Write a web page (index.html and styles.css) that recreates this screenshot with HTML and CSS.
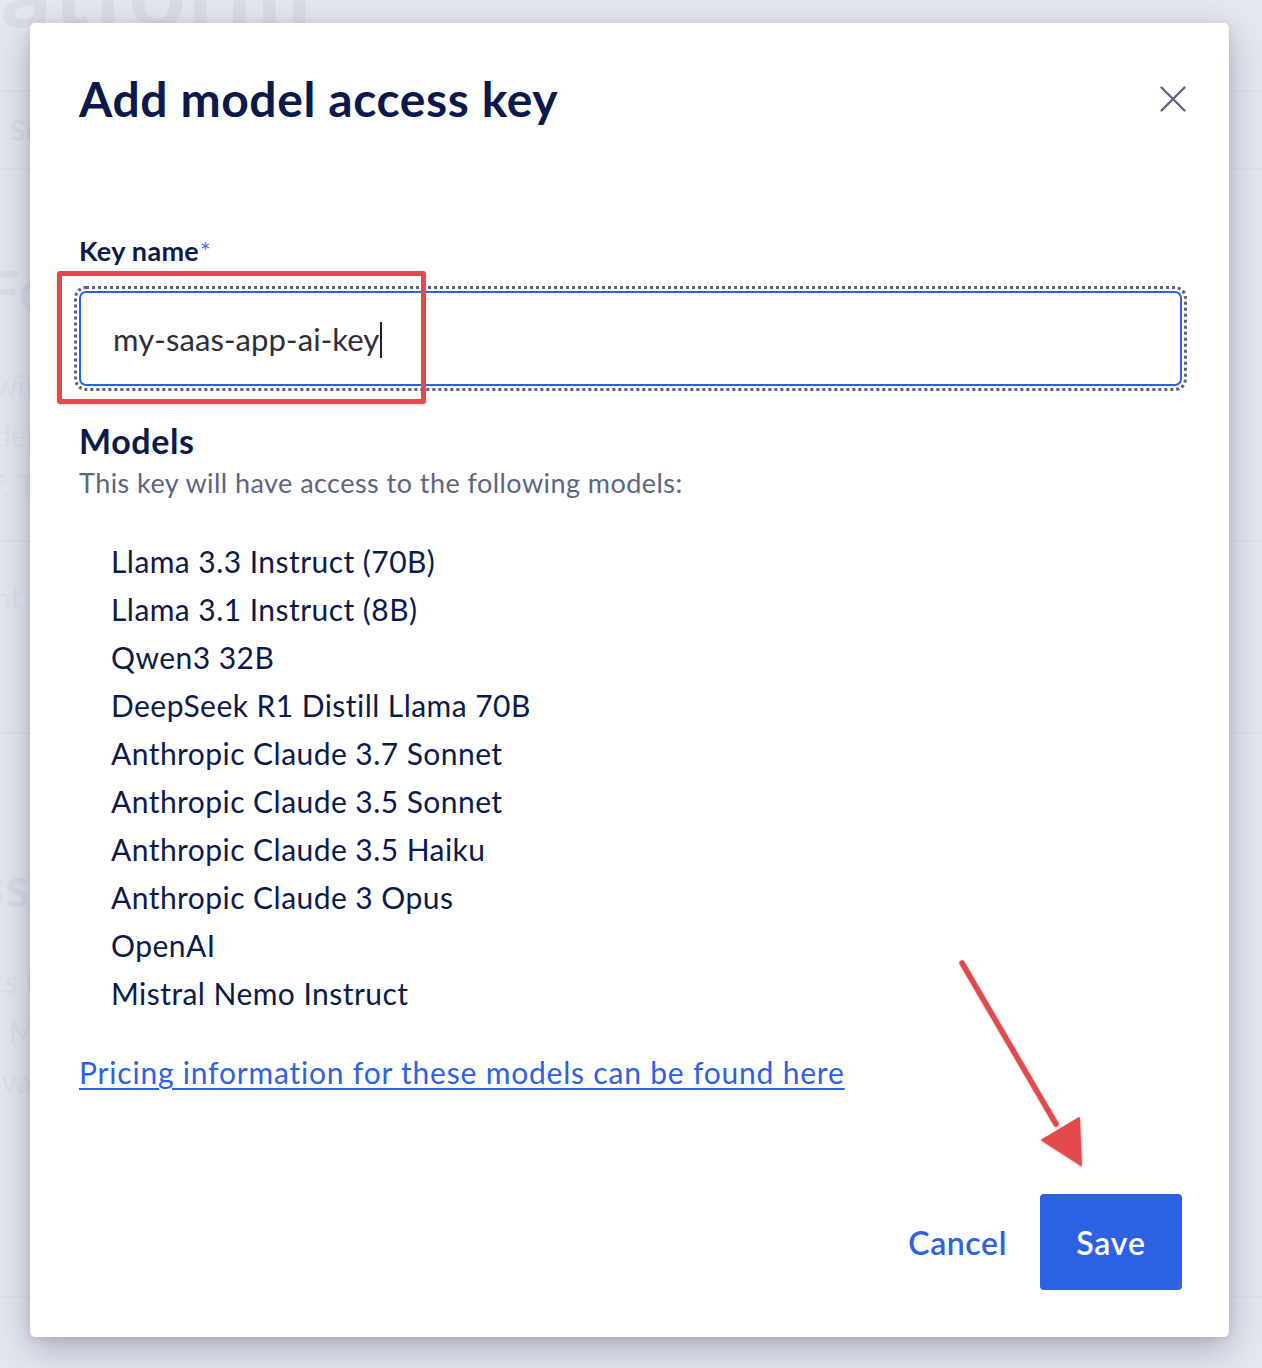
FILE: index.html
```html
<!DOCTYPE html>
<html lang="en">
<head>
<meta charset="utf-8">
<title>Add model access key</title>
<link rel="stylesheet" href="styles.css">
</head>
<body>
<div class="page">
  <div class="page-title">latform</div>
  <div class="page-rule rule-top"></div>
  <div class="page-tabs">Settings</div>
  <div class="page-rule rule-tabs"></div>
  <div class="page-h2">Foundation models</div>
  <p class="page-p">with</p>
  <p class="page-p">deploy</p>
  <p class="page-p">f. The</p>
  <div class="page-rule rule-mid"></div>
  <p class="page-p p-after">nt in</p>
  <div class="page-rule rule-mid2"></div>
  <div class="page-h2 h2-second">ss keys</div>
  <p class="page-p p-tight">ts to</p>
  <p class="page-p p-tight">, Meta</p>
  <p class="page-p p-tight">ivate</p>
  <div class="page-rule rule-bottom"></div>
</div>

<div class="overlay">
  <div class="modal" role="dialog" aria-labelledby="dlg-title">
    <div class="modal-head">
      <h1 id="dlg-title" class="modal-title">Add model access key</h1>
      <button class="close-btn" aria-label="Close">
        <svg width="26" height="26" viewBox="0 0 26 26"><path d="M1.5 1.5 L24.5 24.5 M24.5 1.5 L1.5 24.5" stroke="#5b6580" stroke-width="2.4" stroke-linecap="round" fill="none"/></svg>
      </button>
    </div>

    <label class="field-label" for="keyname">Key name<span class="req">*</span></label>
    <div class="input-wrap">
      <div class="input-box"><span class="input-text">my-saas-app-ai-key</span><span class="caret"></span></div>
      <div class="annot-box"></div>
    </div>

    <h2 class="section-title">Models</h2>
    <p class="section-sub">This key will have access to the following models:</p>

    <ul class="model-list">
      <li>Llama 3.3 Instruct (70B)</li>
      <li>Llama 3.1 Instruct (8B)</li>
      <li>Qwen3 32B</li>
      <li>DeepSeek R1 Distill Llama 70B</li>
      <li>Anthropic Claude 3.7 Sonnet</li>
      <li>Anthropic Claude 3.5 Sonnet</li>
      <li>Anthropic Claude 3.5 Haiku</li>
      <li>Anthropic Claude 3 Opus</li>
      <li>OpenAI</li>
      <li>Mistral Nemo Instruct</li>
    </ul>

    <a class="pricing-link" href="#">Pricing information for these models can be found here</a>

    <div class="modal-foot">
      <button class="btn-cancel">Cancel</button>
      <button class="btn-save">Save</button>
      <svg class="annot-arrow" width="140" height="220" viewBox="0 0 140 220">
        <defs>
          <filter id="sh" x="-20%" y="-20%" width="140%" height="140%">
            <feDropShadow dx="1" dy="1.5" stdDeviation="1.2" flood-color="#000" flood-opacity="0.22"/>
          </filter>
        </defs>
        <g filter="url(#sh)">
          <path d="M12 13 L106 174" stroke="#e34a4d" stroke-width="5.5" stroke-linecap="round" fill="none"/>
          <path d="M131 215 L92 190 L129 168 Z" fill="#e34a4d" stroke="#e34a4d" stroke-width="2" stroke-linejoin="round"/>
        </g>
      </svg>
    </div>
  </div>
</div>
</body>
</html>
```

FILE: styles.css
```css
* { box-sizing: border-box; }
html, body { margin: 0; padding: 0; }
body {
  width: 1262px;
  height: 1368px;
  overflow: hidden;
  background: #eceef3;
  font-family: "Lato", "Open Sans", sans-serif;
  position: relative;
}

/* background page (dimmed) */
.page {
  padding-left: 0;
  color: #cfd3dd;
}
.page-title {
  font-size: 100px;
  font-weight: 700;
  line-height: 1;
  margin-top: -62px;
  margin-left: -26px;
  color: #d3d6df;
  letter-spacing: 2px;
}
.page-rule { height: 2px; background: #dcdfe7; }
.rule-top { margin-top: 52px; }
.page-tabs { font-size: 28px; font-weight: 700; margin: 20px 0 0 10px; color: #d4d7df; line-height: 36px; }
.rule-tabs { margin-top: 20px; }
.page-h2 { font-size: 56px; font-weight: 700; margin: 90px 0 0 -12px; color: #d4d7df; line-height: 60px; letter-spacing: 1px; }
.page-p { font-size: 30px; margin: 0 0 0 -6px; line-height: 50px; color: #d9dce4; }
.page-p:first-of-type { margin-top: 40px; }
.rule-mid { margin-top: 30px; }
.p-after { margin-top: 30px; }
.rule-mid2 { margin-top: 110px; }
.h2-second { margin-top: 122px; margin-left: -20px; }
.p-tight { margin-top: 0; }
.h2-second + .p-tight { margin-top: 40px; }
.rule-bottom { margin-top: 190px; }

/* overlay + modal */
.overlay {
  position: absolute;
  inset: 0;
  background: rgba(226, 228, 236, 0.55);
}
.modal {
  position: absolute;
  left: 30px;
  top: 23px;
  width: 1199px;
  height: 1314px;
  background: #fff;
  border-radius: 5px;
  box-shadow: 0 12px 38px rgba(40, 50, 90, 0.32), 0 2px 8px rgba(40, 50, 90, 0.12);
  padding: 0 43px 0 49px;
  color: #0c1a4b;
}
.modal-head {
  display: flex;
  justify-content: space-between;
  align-items: flex-start;
  padding-top: 46px;
}
.modal-title {
  margin: 0;
  font-size: 48px;
  font-weight: 700;
  line-height: 60px;
  color: #0c1a4b;
  letter-spacing: 0.6px;
}
.close-btn {
  border: 0;
  background: none;
  padding: 0;
  margin: 17px 0 0 0;
  width: 26px;
  height: 26px;
  cursor: pointer;
}
.close-btn svg { display: block; }

.field-label {
  display: block;
  margin-top: 106px;
  font-size: 27px;
  font-weight: 700;
  line-height: 32px;
  color: #0c1a4b;
  letter-spacing: 0.3px;
}
.req { color: #3b74ee; font-weight: 400; font-size: 25px; margin-left: 1px; }

.input-wrap {
  position: relative;
  margin-top: 24px;
}
.input-box {
  height: 95px;
  border: 2px solid #2c62e2;
  border-radius: 7px;
  outline: 3px dotted #59627c;
  outline-offset: 2px;
  display: flex;
  align-items: center;
  padding-left: 32px;
  width: 1103px;
}
.input-text {
  font-size: 31px;
  color: #2e2f36;
  letter-spacing: 0.1px;
}
.caret {
  display: inline-block;
  width: 2px;
  height: 36px;
  background: #222;
  margin-left: 1px;
  position: relative;
  top: 1px;
}
.annot-box {
  position: absolute;
  left: -22px;
  top: -20px;
  width: 369px;
  height: 133px;
  border: 5px solid #e34a4d;
  border-radius: 3px;
  box-shadow: 0 1px 3px rgba(0,0,0,0.15);
}

.section-title {
  margin: 35px 0 0;
  font-size: 34px;
  font-weight: 700;
  line-height: 40px;
  color: #0c1a4b;
  letter-spacing: 0.6px;
}
.section-sub {
  margin: 4px 0 0;
  font-size: 27px;
  line-height: 36px;
  color: #5b6580;
  letter-spacing: 0.45px;
}
.model-list {
  list-style: none;
  margin: 36px 0 0;
  padding: 0 0 0 32px;
}
.model-list li {
  font-size: 30px;
  line-height: 48px;
  color: #0c1a4b;
  letter-spacing: 0.45px;
}
.pricing-link {
  display: inline-block;
  margin-top: 35px;
  font-size: 30px;
  line-height: 40px;
  color: #2c62e2;
  text-decoration: underline;
  text-decoration-thickness: 2px;
  text-underline-offset: 4px;
  letter-spacing: 0.8px;
}

.modal-foot {
  position: relative;
  display: flex;
  justify-content: flex-end;
  align-items: center;
  gap: 33px;
  margin-top: 102px;
  margin-right: 4px;
}
.btn-cancel {
  border: 0;
  background: none;
  font-family: inherit;
  font-size: 32px;
  font-weight: 600;
  color: #2c62e2;
  padding: 0;
  cursor: pointer;
  letter-spacing: 0.6px;
}
.btn-save {
  border: 0;
  background: #2c62e2;
  color: #fff;
  font-family: inherit;
  font-size: 32px;
  font-weight: 600;
  width: 142px;
  height: 96px;
  border-radius: 4px;
  cursor: pointer;
  letter-spacing: 0.8px;
}
.annot-arrow {
  position: absolute;
  left: 871px;
  top: -244px;
  overflow: visible;
}
```
